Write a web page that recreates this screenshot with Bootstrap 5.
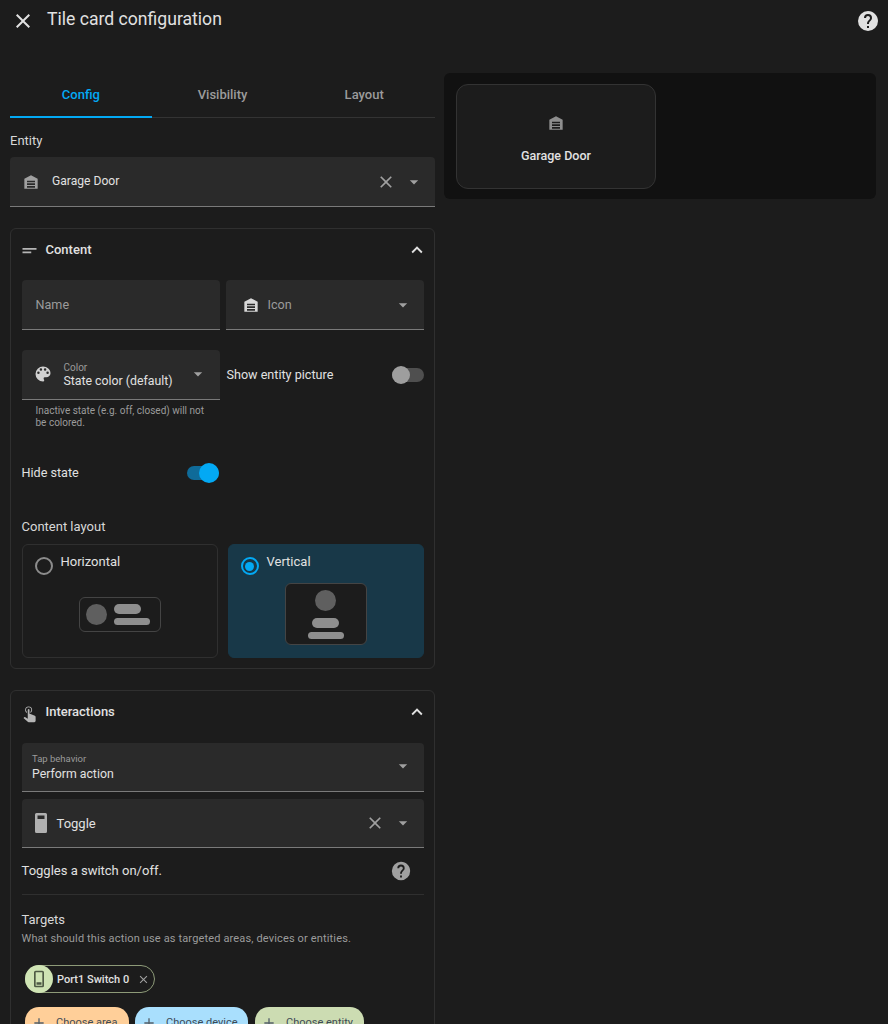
<!DOCTYPE html>
<html lang="en">
<head>
<meta charset="utf-8">
<title>Tile card configuration</title>
<link href="https://cdn.jsdelivr.net/npm/bootstrap@5.3.0/dist/css/bootstrap.min.css" rel="stylesheet">
<style>
html,body{height:1024px;overflow:hidden;background:#1c1c1c;}
body{font-family:Roboto,"Liberation Sans",sans-serif;color:#e1e1e1;font-size:12.6px;line-height:1.2;}
svg.i{fill:currentColor;flex:none;display:block;}
.topbar{height:52px;padding:9px 8px 0 10.5px;}
.topbar h1{font-size:17.6px;font-weight:400;margin:0 0 0 12.5px;line-height:21px;color:#e1e1e1;}
.shell{padding:21px 12px 0 10px;gap:9px;}
.left{width:425px;flex:none;}
.right{width:432px;flex:none;}
.tabs{height:45px;border-bottom:1px solid #333;}
.tabs a{flex:1;text-align:center;font-weight:500;font-size:13px;color:#9b9b9b;text-decoration:none;line-height:43px;height:45px;}
.tabs a.active{color:#03a9f4;border-bottom:2px solid #03a9f4;}
.lbl{font-size:13px;color:#d8d8d8;line-height:16px;}
.fld{background:#2a2a2a;border-radius:4px 4px 0 0;border-bottom:1px solid #7a7a7a;height:50px;color:#e1e1e1;}
.fld .ic{color:#a0a0a0;}
.muted{color:#9b9b9b;}
.small-lbl{font-size:10px;color:#9b9b9b;line-height:12px;}
.val{font-size:12.3px;color:#e1e1e1;line-height:15px;}
.sect{border:1px solid #2f2f2f;border-radius:6px;padding:0 10.5px;}
.sect-h{height:42px;margin:0 -4px 0 0;font-size:13px;font-weight:500;color:#e1e1e1;}
.sect-h .t{margin-left:6px;}
.help{font-size:10px;line-height:12px;color:#9b9b9b;padding:5px 14px 0;}
.sw{width:32px;height:20px;flex:none;position:relative;}
.sw::before{content:"";position:absolute;left:0;right:0;top:3px;height:14px;border-radius:7px;background:#4f4f4f;}
.sw::after{content:"";position:absolute;top:1px;left:0;width:18px;height:18px;border-radius:50%;background:#9e9e9e;}
.sw.on::before{background:#0f6b99;}
.sw.on::after{left:auto;right:0;width:20px;height:20px;top:0;background:#03a9f4;}
.tile{flex:1;height:114px;border:1px solid #2f2f2f;border-radius:6px;padding:9px 12px;position:relative;font-size:13px;}
.tile.sel{background:#183848;border-color:#183848;}
.radio{width:18px;height:18px;border-radius:50%;border:2px solid #8c8c8c;flex:none;margin-top:3px;}
.sel .radio{border-color:#03a9f4;position:relative;}
.sel .radio::after{content:"";position:absolute;inset:2.5px;border-radius:50%;background:#03a9f4;}
.mini{border:1px solid #444;border-radius:6px;background:#1c1c1c;}
.mini .c{width:21px;height:21px;border-radius:50%;background:#5f5f5f;}
.mini .b1{width:27px;height:10px;border-radius:5px;background:#8e8e8e;}
.mini .b2{width:36px;height:7px;border-radius:4px;background:#8e8e8e;}
.mini-h{width:82px;height:35px;padding:0 10px 0 6px;gap:7px;}
.mini-v{width:82px;height:62px;padding:6px 0 0;}
.divider{height:1px;background:#2f2f2f;}
.chip{height:28px;width:130px;border:1px solid #8d9a78;border-radius:14px;font-size:11px;font-weight:500;color:#e1e1e1;}
.chip .cc{width:28px;height:28px;border-radius:50%;background:#cfe4b4;color:#4e5a44;margin:-1px 4px -1px -1px;}
.add{height:32px;border-radius:14px;font-size:11px;color:#3d4a55;padding:0 0 0 6px;gap:9px;}
.add svg{color:#54606a;}
.a1{width:104px;background:#ffcf99;}
.a2{width:113px;background:#a9dffd;}
.a3{width:109px;background:#ccdcb2;}
.preview{background:#111;border-radius:6px;height:126px;padding:11px 12px;}
.ptile{width:200px;height:105px;background:#1c1c1c;border:1px solid #333;border-radius:12px;}
</style>
</head>
<body>
<header class="topbar d-flex align-items-start">
  <svg class="i" width="24" height="24" viewBox="0 0 24 24" style="color:#e1e1e1"><path d="M19,6.41L17.59,5L12,10.59L6.41,5L5,6.41L10.59,12L5,17.59L6.41,19L12,13.41L17.59,19L19,17.59L13.41,12L19,6.41Z"/></svg>
  <h1 class="flex-grow-1">Tile card configuration</h1>
  <svg class="i" width="24" height="24" viewBox="0 0 24 24" style="color:#e1e1e1"><path d="M15.07,11.25L14.17,12.17C13.45,12.89 13,13.5 13,15H11V14.5C11,13.39 11.45,12.39 12.17,11.67L13.41,10.41C13.78,10.05 14,9.55 14,9C14,7.89 13.1,7 12,7A2,2 0 0,0 10,9H8A4,4 0 0,1 12,5A4,4 0 0,1 16,9C16,9.88 15.64,10.67 15.07,11.25M13,19H11V17H13M12,2A10,10 0 0,0 2,12A10,10 0 0,0 12,22A10,10 0 0,0 22,12C22,6.47 17.5,2 12,2Z"/></svg>
</header>

<main class="shell d-flex align-items-start">
  <section class="left">
    <nav class="tabs d-flex">
      <a class="active" href="#">Config</a><a href="#">Visibility</a><a href="#">Layout</a>
    </nav>

    <div class="lbl" style="margin-top:15px">Entity</div>
    <div class="fld d-flex align-items-center" style="margin-top:8px;padding:0 11px 0 13px">
      <svg class="i ic" width="16" height="16" viewBox="0 0 24 24"><path fill-rule="evenodd" d="M12 2L2 7V22H22V7L12 2M6 10H18V12.5H6V10M6 14H18V16.5H6V14M6 18H18V20.5H6V18Z"/></svg>
      <span class="flex-grow-1" style="margin-left:13px;font-size:12.1px">Garage Door</span>
      <svg class="i ic" width="20" height="20" viewBox="0 0 24 24"><path d="M19,6.41L17.59,5L12,10.59L6.41,5L5,6.41L10.59,12L5,17.59L6.41,19L12,13.41L17.59,19L19,17.59L13.41,12L19,6.41Z"/></svg>
      <svg class="i ic" width="20" height="20" viewBox="0 0 24 24" style="margin-left:8px"><path d="M7,10L12,15L17,10H7Z"/></svg>
    </div>

    <div class="sect" style="margin-top:21px;height:441px">
      <div class="sect-h d-flex align-items-center">
        <svg class="i ic" width="21" height="21" viewBox="0 0 24 24" style="color:#b5b5b5;margin-left:-3px"><path d="M4,9H20V11H4V9M4,13H14V15H4V13Z"/></svg>
        <span class="t flex-grow-1">Content</span>
        <svg class="i" width="22" height="22" viewBox="0 0 24 24"><path d="M7.41,15.41L12,10.83L16.59,15.41L18,14L12,8L6,14L7.41,15.41Z"/></svg>
      </div>
      <div class="d-flex" style="margin-top:9px;gap:6px">
        <div class="fld flex-fill d-flex align-items-center muted" style="width:198px;padding:0 14px">Name</div>
        <div class="fld flex-fill d-flex align-items-center" style="width:198px;padding:0 11px 0 17px">
          <svg class="i" width="16" height="16" viewBox="0 0 24 24" style="color:#d8d8d8"><path fill-rule="evenodd" d="M12 2L2 7V22H22V7L12 2M6 10H18V12.5H6V10M6 14H18V16.5H6V14M6 18H18V20.5H6V18Z"/></svg>
          <span class="muted flex-grow-1" style="margin-left:9px">Icon</span>
          <svg class="i ic" width="20" height="20" viewBox="0 0 24 24"><path d="M7,10L12,15L17,10H7Z"/></svg>
        </div>
      </div>
      <div class="d-flex" style="margin-top:20px;gap:6px">
        <div style="width:198px;flex:none">
          <div class="fld d-flex align-items-center" style="padding:2px 12px 0 11px">
            <svg class="i" width="20" height="20" viewBox="0 0 24 24" style="color:#d0d0d0;margin-top:-4px"><path d="M17.5,12A1.5,1.5 0 0,1 16,10.5A1.5,1.5 0 0,1 17.5,9A1.5,1.5 0 0,1 19,10.5A1.5,1.5 0 0,1 17.5,12M14.5,8A1.5,1.5 0 0,1 13,6.5A1.5,1.5 0 0,1 14.5,5A1.5,1.5 0 0,1 16,6.5A1.5,1.5 0 0,1 14.5,8M9.5,8A1.5,1.5 0 0,1 8,6.5A1.5,1.5 0 0,1 9.5,5A1.5,1.5 0 0,1 11,6.5A1.5,1.5 0 0,1 9.5,8M6.5,12A1.5,1.5 0 0,1 5,10.5A1.5,1.5 0 0,1 6.5,9A1.5,1.5 0 0,1 8,10.5A1.5,1.5 0 0,1 6.5,12M12,3A9,9 0 0,0 3,12A9,9 0 0,0 12,21A1.5,1.5 0 0,0 13.5,19.5C13.5,19.11 13.35,18.76 13.11,18.5C12.88,18.23 12.73,17.88 12.73,17.5A1.5,1.5 0 0,1 14.23,16H16A5,5 0 0,0 21,11C21,6.58 16.97,3 12,3Z"/></svg>
            <div class="flex-grow-1" style="margin-left:11px">
              <div class="small-lbl">Color</div>
              <div class="val">State color (default)</div>
            </div>
            <svg class="i ic" width="20" height="20" viewBox="0 0 24 24" style="margin-top:-4px"><path d="M7,10L12,15L17,10H7Z"/></svg>
          </div>
          <div class="help">Inactive state (e.g. off, closed) will not be colored.</div>
        </div>
        <div class="flex-grow-1 d-flex align-items-start justify-content-between" style="padding-top:15px">
          <span style="margin:2px 0 0 1px">Show entity picture</span><span class="sw"></span>
        </div>
      </div>
      <div class="d-flex align-items-center justify-content-between" style="width:197.5px;margin-top:34px;height:20px">
        <span>Hide state</span><span class="sw on"></span>
      </div>
      <div class="lbl" style="margin-top:36px">Content layout</div>
      <div class="d-flex" style="margin-top:9px;gap:10px">
        <div class="tile">
          <div class="d-flex" style="gap:8px"><span class="radio"></span><span>Horizontal</span></div>
          <div class="d-flex justify-content-center" style="margin-top:22px">
            <div class="mini mini-h d-flex align-items-center"><span class="c"></span>
              <div class="d-flex flex-column" style="gap:4px"><span class="b1"></span><span class="b2"></span></div></div>
          </div>
        </div>
        <div class="tile sel">
          <div class="d-flex" style="gap:8px"><span class="radio"></span><span>Vertical</span></div>
          <div class="d-flex justify-content-center" style="margin-top:8px">
            <div class="mini mini-v d-flex flex-column align-items-center"><span class="c"></span>
              <span class="b1" style="margin-top:7px"></span><span class="b2" style="margin-top:4px"></span></div>
          </div>
        </div>
      </div>
    </div>

    <div class="sect" style="margin-top:21px;height:400px">
      <div class="sect-h d-flex align-items-center">
        <svg class="i" width="21" height="21" viewBox="0 0 24 24" style="color:#b5b5b5;margin-left:-3px"><path d="M10,9A1,1 0 0,1 11,8A1,1 0 0,1 12,9V13.47L13.21,13.6L18.15,15.79C18.68,16.03 19,16.56 19,17.14V21.5C18.97,22.32 18.32,22.97 17.5,23H11C10.62,23 10.26,22.85 10,22.57L5.1,18.37L5.84,17.6C6.03,17.39 6.3,17.28 6.58,17.28H6.8L10,19V9M11,5A4,4 0 0,1 15,9C15,10.5 14.2,11.77 13,12.46V11.24C13.61,10.69 14,9.89 14,9A3,3 0 0,0 11,6A3,3 0 0,0 8,9C8,9.89 8.39,10.69 9,11.24V12.46C7.8,11.77 7,10.5 7,9A4,4 0 0,1 11,5Z"/></svg>
        <span class="t flex-grow-1">Interactions</span>
        <svg class="i" width="22" height="22" viewBox="0 0 24 24"><path d="M7.41,15.41L12,10.83L16.59,15.41L18,14L12,8L6,14L7.41,15.41Z"/></svg>
      </div>
      <div class="fld d-flex align-items-center" style="margin-top:10px;padding:2px 11px 0 10.5px;height:49px">
        <div class="flex-grow-1">
          <div class="small-lbl" style="font-size:9.5px;margin:-2px 0 2px">Tap behavior</div>
          <div class="val">Perform action</div>
        </div>
        <svg class="i ic" width="20" height="20" viewBox="0 0 24 24" style="margin-top:-4px"><path d="M7,10L12,15L17,10H7Z"/></svg>
      </div>
      <div class="fld d-flex align-items-center" style="margin-top:7px;padding:0 11px 0 7px;height:49px">
        <svg class="i ic" width="24" height="24" viewBox="0 0 24 24" style="color:#b0b0b0"><path fill-rule="evenodd" d="M7.5 2H16.5A1.5 1.5 0 0 1 18 3.5V20.5A1.5 1.5 0 0 1 16.5 22H7.5A1.5 1.5 0 0 1 6 20.5V3.500A1.5 1.5 0 0 1 7.500 2M8.500 4.500V8H15.500V4.500H8.500Z"/></svg>
        <span class="flex-grow-1" style="margin:1px 0 0 4px;font-size:13px">Toggle</span>
        <svg class="i ic" width="20" height="20" viewBox="0 0 24 24"><path d="M19,6.41L17.59,5L12,10.59L6.41,5L5,6.41L10.59,12L5,17.59L6.41,19L12,13.41L17.59,19L19,17.59L13.41,12L19,6.41Z"/></svg>
        <svg class="i ic" width="20" height="20" viewBox="0 0 24 24" style="margin-left:8px"><path d="M7,10L12,15L17,10H7Z"/></svg>
      </div>
      <div class="d-flex align-items-center justify-content-between" style="height:46px;padding-right:12px">
        <span style="font-size:13px">Toggles a switch on/off.</span>
        <svg class="i" width="22" height="22" viewBox="0 0 24 24" style="color:#a0a0a0"><path d="M15.07,11.25L14.17,12.17C13.45,12.89 13,13.5 13,15H11V14.5C11,13.39 11.45,12.39 12.17,11.67L13.41,10.41C13.78,10.05 14,9.55 14,9C14,7.89 13.1,7 12,7A2,2 0 0,0 10,9H8A4,4 0 0,1 12,5A4,4 0 0,1 16,9C16,9.88 15.64,10.67 15.07,11.25M13,19H11V17H13M12,2A10,10 0 0,0 2,12A10,10 0 0,0 12,22A10,10 0 0,0 22,12C22,6.47 17.5,2 12,2Z"/></svg>
      </div>
      <div class="divider"></div>
      <div class="lbl" style="margin-top:17px">Targets</div>
      <div class="muted" style="font-size:11px;line-height:14px;margin-top:4px;letter-spacing:.15px">What should this action use as targeted areas, devices or entities.</div>
      <div class="chip d-flex align-items-center" style="margin:19px 0 0 3.500px">
        <span class="cc d-flex align-items-center justify-content-center">
          <svg class="i" width="20" height="20" viewBox="0 0 24 24"><path fill-rule="evenodd" d="M8 2H16A2 2 0 0 1 18 4V20A2 2 0 0 1 16 22H8A2 2 0 0 1 6 20V4A2 2 0 0 1 8 2M8 4V20H16V4H8M9 16H15V19H9V16Z"/></svg>
        </span>
        <span class="flex-grow-1" style="padding-top:1px">Port1 Switch 0</span>
        <svg class="i me-1" width="13" height="13" viewBox="0 0 24 24" style="color:#a0a0a0"><path d="M19,6.41L17.59,5L12,10.59L6.41,5L5,6.41L10.59,12L5,17.59L6.41,19L12,13.41L17.59,19L19,17.59L13.41,12L19,6.41Z"/></svg>
      </div>
      <div class="d-flex" style="margin:14px 0 0 3.500px;gap:6px">
        <span class="add a1 d-flex align-items-center"><svg class="i" width="16" height="16" viewBox="0 0 24 24"><path d="M19,13H13V19H11V13H5V11H11V5H13V11H19V13Z"/></svg>Choose area</span>
        <span class="add a2 d-flex align-items-center"><svg class="i" width="16" height="16" viewBox="0 0 24 24"><path d="M19,13H13V19H11V13H5V11H11V5H13V11H19V13Z"/></svg>Choose device</span>
        <span class="add a3 d-flex align-items-center" style="margin-left:1px"><svg class="i" width="16" height="16" viewBox="0 0 24 24"><path d="M19,13H13V19H11V13H5V11H11V5H13V11H19V13Z"/></svg>Choose entity</span>
      </div>
    </div>
  </section>

  <aside class="right">
    <div class="preview">
      <div class="ptile d-flex flex-column align-items-center">
        <svg class="i" width="16" height="16" viewBox="0 0 24 24" style="color:#8e8e8e;margin-top:30px"><path fill-rule="evenodd" d="M12 2L2 7V22H22V7L12 2M6 10H18V12.5H6V10M6 14H18V16.5H6V14M6 18H18V20.5H6V18Z"/></svg>
        <div style="font-weight:500;font-size:12.5px;margin-top:17px;line-height:15px">Garage Door</div>
      </div>
    </div>
  </aside>
</main>
</body>
</html>
